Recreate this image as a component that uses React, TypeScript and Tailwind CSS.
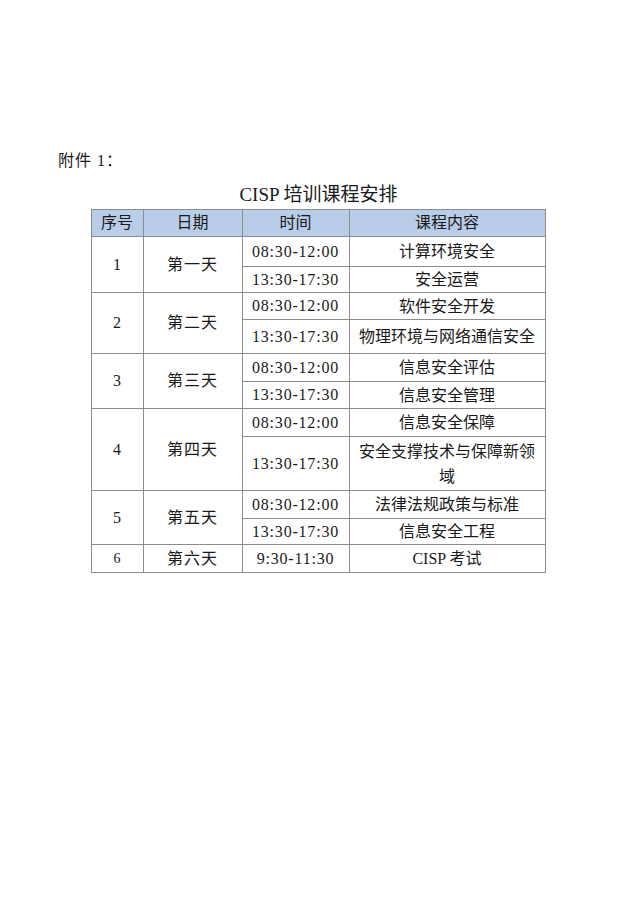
const font = { fontFamily: '"Liberation Serif", "Noto Sans CJK SC", serif' };

type Slot = { time: string; course: React.ReactNode; h: string };
type Day = { no: string; day: string; slots: Slot[] };

const days: Day[] = [
  {
    no: '1',
    day: '第一天',
    slots: [
      { time: '08:30-12:00', course: '计算环境安全', h: 'h-[30px]' },
      { time: '13:30-17:30', course: '安全运营', h: 'h-[26px]' },
    ],
  },
  {
    no: '2',
    day: '第二天',
    slots: [
      { time: '08:30-12:00', course: '软件安全开发', h: 'h-[27px]' },
      { time: '13:30-17:30', course: '物理环境与网络通信安全', h: 'h-[34px]' },
    ],
  },
  {
    no: '3',
    day: '第三天',
    slots: [
      { time: '08:30-12:00', course: '信息安全评估', h: 'h-[28px]' },
      { time: '13:30-17:30', course: '信息安全管理', h: 'h-[27px]' },
    ],
  },
  {
    no: '4',
    day: '第四天',
    slots: [
      { time: '08:30-12:00', course: '信息安全保障', h: 'h-[28px]' },
      {
        time: '13:30-17:30',
        course: (
          <>
            安全支撑技术与保障新领
            <br />域
          </>
        ),
        h: 'h-[54px]',
      },
    ],
  },
  {
    no: '5',
    day: '第五天',
    slots: [
      { time: '08:30-12:00', course: '法律法规政策与标准', h: 'h-[28px]' },
      { time: '13:30-17:30', course: '信息安全工程', h: 'h-[26px]' },
    ],
  },
  {
    no: '6',
    day: '第六天',
    slots: [{ time: '9:30-11:30', course: 'CISP 考试', h: 'h-[28px]' }],
  },
];

const cell = 'border border-[#8c8c8c] text-center align-middle p-0';

export default function App() {
  return (
    <div className="min-h-[900px] w-[636px] bg-white text-[#1a1a1a]" style={font}>
      <div className="pt-[151px] pl-[58px] text-[16px] leading-[20px] tracking-[1px]">附件 1：</div>

      <h1 className="mt-[12px] text-center text-[19px] leading-[24px] font-normal pl-[1px]">
        CISP 培训课程安排
      </h1>

      <div className="mt-[2px] flex justify-center">
        <table className="w-[454px] border-collapse table-fixed text-[16px]">
          <colgroup>
            <col className="w-[52px]" />
            <col className="w-[99px]" />
            <col className="w-[107px]" />
            <col className="w-[196px]" />
          </colgroup>
          <thead>
            <tr className="h-[27px] bg-[#b9cde8]">
              <th className={`${cell} font-normal`}>序号</th>
              <th className={`${cell} font-normal`}>日期</th>
              <th className={`${cell} font-normal`}>时间</th>
              <th className={`${cell} font-normal`}>课程内容</th>
            </tr>
          </thead>
          <tbody>
            {days.map((d) =>
              d.slots.map((s, i) => (
                <tr key={d.no + i} className={s.h}>
                  {i === 0 && (
                    <>
                      <td rowSpan={d.slots.length} className={`${cell} ${d.no === '6' ? 'text-[14px]' : ''}`}>
                        {d.no}
                      </td>
                      <td rowSpan={d.slots.length} className={`${cell} tracking-[1px]`}>
                        {d.day}
                      </td>
                    </>
                  )}
                  <td className={`${cell} tracking-[0.8px] leading-[20px]`}>{s.time}</td>
                  <td className={`${cell} leading-[25px]`}>{s.course}</td>
                </tr>
              ))
            )}
          </tbody>
        </table>
      </div>
    </div>
  );
}
